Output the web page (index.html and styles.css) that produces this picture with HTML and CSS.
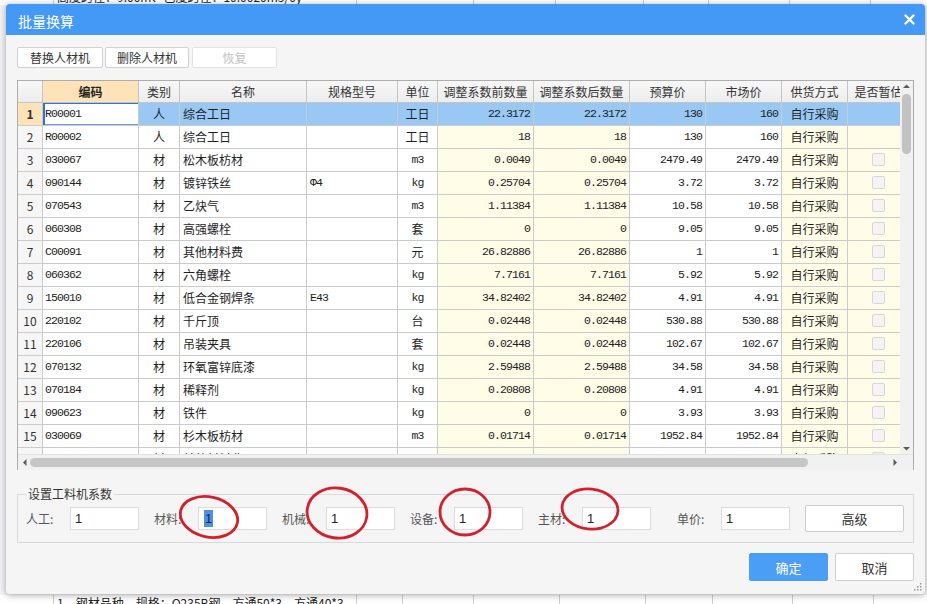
FILE: index.html
```html
<!DOCTYPE html>
<html lang="zh-CN">
<head>
<meta charset="utf-8">
<title>批量换算</title>
<link rel="stylesheet" href="styles.css">
</head>
<body>
<div class="backdrop">
  <div class="bg-row bg-top">
    <div class="bc w53"></div>
    <div class="bc w303 txt">高度跨径：9.00m、已度跨径：10.0020m3/0y</div>
    <div class="bc w117"></div>
    <div class="bc w82"></div>
    <div class="bc w88"></div>
    <div class="bc w65"></div>
    <div class="bc w81"></div>
    <div class="bc w81"></div>
    <div class="bc"></div>
  </div>
  <div class="bg-row bg-bottom">
    <div class="bc w53"></div>
    <div class="bc w303 txt">1、钢材品种、规格：Q235B钢、方通50*3、方通40*3</div>
    <div class="bc w46"></div>
    <div class="bc w71"></div>
    <div class="bc w86"></div>
    <div class="bc w86"></div>
    <div class="bc w67"></div>
    <div class="bc w80"></div>
    <div class="bc w81"></div>
    <div class="bc"></div>
  </div>
</div>

<div class="dialog">
  <div class="dlg-head">
    <span class="dlg-title">批量换算</span>
    <svg class="dlg-close" width="11" height="11" viewBox="0 0 11 11"><path d="M1.5 1.5 L9.5 9.5 M9.5 1.5 L1.5 9.5" stroke="#fff" stroke-width="2.4" stroke-linecap="round"/></svg>
  </div>
  <div class="dlg-body">
    <div class="toolbar">
      <button class="btn b1">替换人材机</button>
      <button class="btn b2">删除人材机</button>
      <button class="btn b3" disabled>恢复</button>
    </div>

    <div class="grid">
      <div class="grid-main">
        <div class="view">
          <div class="row head">
            <div class="c rn"></div>
            <div class="c hsel">编码</div>
            <div class="c">类别</div>
            <div class="c">名称</div>
            <div class="c">规格型号</div>
            <div class="c">单位</div>
            <div class="c">调整系数前数量</div>
            <div class="c">调整系数后数量</div>
            <div class="c">预算价</div>
            <div class="c">市场价</div>
            <div class="c">供货方式</div>
            <div class="c">是否暂估</div>
          </div>

          <div class="row sel">
            <div class="c rn rsel">1</div>
            <div class="c code act">R00001</div>
            <div class="c ctr">人</div>
            <div class="c name">综合工日</div>
            <div class="c spec"></div>
            <div class="c ctr">工日</div>
            <div class="c n">22.3172</div>
            <div class="c n">22.3172</div>
            <div class="c n">130</div>
            <div class="c n">160</div>
            <div class="c ctr">自行采购</div>
            <div class="c ctr"></div>
          </div>

          <div class="row">
            <div class="c rn">2</div>
            <div class="c code">R00002</div>
            <div class="c ctr">人</div>
            <div class="c name">综合工日</div>
            <div class="c spec"></div>
            <div class="c ctr">工日</div>
            <div class="c n y">18</div>
            <div class="c n y">18</div>
            <div class="c n">130</div>
            <div class="c n">160</div>
            <div class="c ctr y">自行采购</div>
            <div class="c ctr y"></div>
          </div>

          <div class="row">
            <div class="c rn">3</div>
            <div class="c code">030067</div>
            <div class="c ctr">材</div>
            <div class="c name">松木板枋材</div>
            <div class="c spec"></div>
            <div class="c ctr um">m3</div>
            <div class="c n y">0.0049</div>
            <div class="c n y">0.0049</div>
            <div class="c n">2479.49</div>
            <div class="c n">2479.49</div>
            <div class="c ctr y">自行采购</div>
            <div class="c ctr y"><span class="cb"></span></div>
          </div>

          <div class="row">
            <div class="c rn">4</div>
            <div class="c code">090144</div>
            <div class="c ctr">材</div>
            <div class="c name">镀锌铁丝</div>
            <div class="c spec">Φ4</div>
            <div class="c ctr um">kg</div>
            <div class="c n y">0.25704</div>
            <div class="c n y">0.25704</div>
            <div class="c n">3.72</div>
            <div class="c n">3.72</div>
            <div class="c ctr y">自行采购</div>
            <div class="c ctr y"><span class="cb"></span></div>
          </div>

          <div class="row">
            <div class="c rn">5</div>
            <div class="c code">070543</div>
            <div class="c ctr">材</div>
            <div class="c name">乙炔气</div>
            <div class="c spec"></div>
            <div class="c ctr um">m3</div>
            <div class="c n y">1.11384</div>
            <div class="c n y">1.11384</div>
            <div class="c n">10.58</div>
            <div class="c n">10.58</div>
            <div class="c ctr y">自行采购</div>
            <div class="c ctr y"><span class="cb"></span></div>
          </div>

          <div class="row">
            <div class="c rn">6</div>
            <div class="c code">060308</div>
            <div class="c ctr">材</div>
            <div class="c name">高强螺栓</div>
            <div class="c spec"></div>
            <div class="c ctr">套</div>
            <div class="c n y">0</div>
            <div class="c n y">0</div>
            <div class="c n">9.05</div>
            <div class="c n">9.05</div>
            <div class="c ctr y">自行采购</div>
            <div class="c ctr y"><span class="cb"></span></div>
          </div>

          <div class="row">
            <div class="c rn">7</div>
            <div class="c code">C00091</div>
            <div class="c ctr">材</div>
            <div class="c name">其他材料费</div>
            <div class="c spec"></div>
            <div class="c ctr">元</div>
            <div class="c n y">26.82886</div>
            <div class="c n y">26.82886</div>
            <div class="c n">1</div>
            <div class="c n">1</div>
            <div class="c ctr y">自行采购</div>
            <div class="c ctr y"><span class="cb"></span></div>
          </div>

          <div class="row">
            <div class="c rn">8</div>
            <div class="c code">060362</div>
            <div class="c ctr">材</div>
            <div class="c name">六角螺栓</div>
            <div class="c spec"></div>
            <div class="c ctr um">kg</div>
            <div class="c n y">7.7161</div>
            <div class="c n y">7.7161</div>
            <div class="c n">5.92</div>
            <div class="c n">5.92</div>
            <div class="c ctr y">自行采购</div>
            <div class="c ctr y"><span class="cb"></span></div>
          </div>

          <div class="row">
            <div class="c rn">9</div>
            <div class="c code">150010</div>
            <div class="c ctr">材</div>
            <div class="c name">低合金钢焊条</div>
            <div class="c spec">E43</div>
            <div class="c ctr um">kg</div>
            <div class="c n y">34.82402</div>
            <div class="c n y">34.82402</div>
            <div class="c n">4.91</div>
            <div class="c n">4.91</div>
            <div class="c ctr y">自行采购</div>
            <div class="c ctr y"><span class="cb"></span></div>
          </div>

          <div class="row">
            <div class="c rn">10</div>
            <div class="c code">220102</div>
            <div class="c ctr">材</div>
            <div class="c name">千斤顶</div>
            <div class="c spec"></div>
            <div class="c ctr">台</div>
            <div class="c n y">0.02448</div>
            <div class="c n y">0.02448</div>
            <div class="c n">530.88</div>
            <div class="c n">530.88</div>
            <div class="c ctr y">自行采购</div>
            <div class="c ctr y"><span class="cb"></span></div>
          </div>

          <div class="row">
            <div class="c rn">11</div>
            <div class="c code">220106</div>
            <div class="c ctr">材</div>
            <div class="c name">吊装夹具</div>
            <div class="c spec"></div>
            <div class="c ctr">套</div>
            <div class="c n y">0.02448</div>
            <div class="c n y">0.02448</div>
            <div class="c n">102.67</div>
            <div class="c n">102.67</div>
            <div class="c ctr y">自行采购</div>
            <div class="c ctr y"><span class="cb"></span></div>
          </div>

          <div class="row">
            <div class="c rn">12</div>
            <div class="c code">070132</div>
            <div class="c ctr">材</div>
            <div class="c name">环氧富锌底漆</div>
            <div class="c spec"></div>
            <div class="c ctr um">kg</div>
            <div class="c n y">2.59488</div>
            <div class="c n y">2.59488</div>
            <div class="c n">34.58</div>
            <div class="c n">34.58</div>
            <div class="c ctr y">自行采购</div>
            <div class="c ctr y"><span class="cb"></span></div>
          </div>

          <div class="row">
            <div class="c rn">13</div>
            <div class="c code">070184</div>
            <div class="c ctr">材</div>
            <div class="c name">稀释剂</div>
            <div class="c spec"></div>
            <div class="c ctr um">kg</div>
            <div class="c n y">0.20808</div>
            <div class="c n y">0.20808</div>
            <div class="c n">4.91</div>
            <div class="c n">4.91</div>
            <div class="c ctr y">自行采购</div>
            <div class="c ctr y"><span class="cb"></span></div>
          </div>

          <div class="row">
            <div class="c rn">14</div>
            <div class="c code">090623</div>
            <div class="c ctr">材</div>
            <div class="c name">铁件</div>
            <div class="c spec"></div>
            <div class="c ctr um">kg</div>
            <div class="c n y">0</div>
            <div class="c n y">0</div>
            <div class="c n">3.93</div>
            <div class="c n">3.93</div>
            <div class="c ctr y">自行采购</div>
            <div class="c ctr y"><span class="cb"></span></div>
          </div>

          <div class="row">
            <div class="c rn">15</div>
            <div class="c code">030069</div>
            <div class="c ctr">材</div>
            <div class="c name">杉木板枋材</div>
            <div class="c spec"></div>
            <div class="c ctr um">m3</div>
            <div class="c n y">0.01714</div>
            <div class="c n y">0.01714</div>
            <div class="c n">1952.84</div>
            <div class="c n">1952.84</div>
            <div class="c ctr y">自行采购</div>
            <div class="c ctr y"><span class="cb"></span></div>
          </div>

          <div class="row">
            <div class="c rn">16</div>
            <div class="c code">C00092</div>
            <div class="c ctr">材</div>
            <div class="c name">其他材料费</div>
            <div class="c spec"></div>
            <div class="c ctr">元</div>
            <div class="c n y">0.0235</div>
            <div class="c n y">0.0235</div>
            <div class="c n">1</div>
            <div class="c n">1</div>
            <div class="c ctr y">自行采购</div>
            <div class="c ctr y"><span class="cb"></span></div>
          </div>
        </div>
        <div class="vscroll">
          <svg class="arr" width="13" height="10" viewBox="0 0 13 10"><path d="M3 7 L6.5 3.5 L10 7 Z" fill="#5a5a5a"/></svg>
          <div class="vtrack"><div class="vthumb"></div></div>
          <svg class="arr" width="13" height="10" viewBox="0 0 13 10"><path d="M3 3 L6.5 6.5 L10 3 Z" fill="#5a5a5a"/></svg>
        </div>
      </div>
      <div class="grid-hbar">
        <div class="hscroll">
          <svg class="harr" width="10" height="15" viewBox="0 0 10 15"><path d="M6.5 4 L3 7.5 L6.5 11 Z" fill="#5a5a5a"/></svg>
          <div class="htrack"><div class="hthumb"></div></div>
          <svg class="harr" width="10" height="15" viewBox="0 0 10 15"><path d="M3.5 4 L7 7.5 L3.5 11 Z" fill="#5a5a5a"/></svg>
        </div>
        <div class="corner"></div>
      </div>
    </div>

    <fieldset class="coef">
      <legend>设置工料机系数</legend>
      <div class="fgroup"><span class="flabel">人工:</span><div class="field">1</div></div>
      <div class="fgroup"><span class="flabel">材料:</span><div class="field"><span class="seltext">1</span></div></div>
      <div class="fgroup"><span class="flabel">机械:</span><div class="field">1</div></div>
      <div class="fgroup"><span class="flabel">设备:</span><div class="field">1</div></div>
      <div class="fgroup"><span class="flabel">主材:</span><div class="field">1</div></div>
      <div class="fgroup price"><span class="flabel">单价:</span><div class="field">1</div></div>
      <button class="btn adv">高级</button>
    </fieldset>

    <div class="footer">
      <button class="btn ok">确定</button>
      <button class="btn cancel">取消</button>
    </div>
  </div>
  <svg class="grip" width="8" height="8" viewBox="0 0 8 8"><g fill="#9a9a9a"><rect x="6" y="0" width="1.5" height="1.5"/><rect x="3" y="3" width="1.5" height="1.5"/><rect x="6" y="3" width="1.5" height="1.5"/><rect x="0" y="6" width="1.5" height="1.5"/><rect x="3" y="6" width="1.5" height="1.5"/><rect x="6" y="6" width="1.5" height="1.5"/></g></svg>
</div>

<svg class="marks" width="927" height="604" viewBox="0 0 927 604">
  <g fill="none" stroke="#d3202d" stroke-width="2.8">
    <ellipse cx="209" cy="517" rx="29" ry="20" transform="rotate(12 209 517)"/>
    <ellipse cx="337" cy="513" rx="30" ry="25" transform="rotate(8 337 513)"/>
    <ellipse cx="465" cy="512" rx="25" ry="23"/>
    <ellipse cx="590" cy="509" rx="28" ry="20" transform="rotate(6 590 509)"/>
  </g>
</svg>
</body>
</html>
```

FILE: styles.css
```css
* { box-sizing: border-box; }

html, body {
  margin: 0;
  padding: 0;
}

body {
  width: 927px;
  height: 604px;
  overflow: hidden;
  position: relative;
  background: #ffffff;
  font-family: "Noto Sans CJK SC", "Noto Sans", sans-serif;
  font-size: 12px;
  color: #222;
}

/* ---------- backdrop page ---------- */
.backdrop {
  height: 604px;
  display: flex;
  flex-direction: column;
  justify-content: space-between;
  background: #f3f4f6;
}

.bg-row {
  display: flex;
  height: 16px;
  background: #ffffff;
  font-size: 12px;
  line-height: 16px;
  color: #222;
}

.bg-top { margin-top: -11px; }
.bg-bottom { margin-bottom: -7px; }

.bc {
  flex: none;
  border-left: 1px solid #cfcfcf;
  white-space: nowrap;
  overflow: hidden;
}
.bc:first-child { border-left: none; }
.bc:last-child { flex: 1; }
.bc.txt { padding-left: 3px; }

.w53 { width: 53px; }
.w303 { width: 303px; }
.w117 { width: 117px; }
.w82 { width: 82px; }
.w88 { width: 88px; }
.w65 { width: 65px; }
.w81 { width: 81px; }
.w46 { width: 46px; }
.w71 { width: 71px; }
.w86 { width: 86px; }
.w67 { width: 67px; }
.w80 { width: 80px; }

/* ---------- dialog ---------- */
.dialog {
  position: absolute;
  left: 6px;
  top: 4px;
  width: 919px;
  height: 590px;
  background: #f5f5f5;
  border-radius: 4px;
  box-shadow: 0 1px 7px rgba(0, 0, 0, 0.35);
  overflow: hidden;
}

.dlg-head {
  height: 31px;
  background: #4399f5;
  display: flex;
  align-items: center;
  justify-content: space-between;
  padding: 0 10px 0 12px;
}

.dlg-title {
  color: #ffffff;
  font-size: 14px;
  line-height: 18px;
  margin-top: 2px;
}

.dlg-close { display: block; }

.dlg-body {
  padding: 12px 11px 0 11px;
}

/* toolbar */
.toolbar {
  display: flex;
  gap: 2px;
  height: 21px;
}

.btn {
  font-family: "Noto Sans CJK SC", "Noto Sans", sans-serif;
  font-size: 12px;
  color: #333;
  background: #ffffff;
  border: 1px solid #d2d2d2;
  border-radius: 2px;
  padding: 0;
  margin: 0;
}

.b1 { width: 86px; }
.b2 { width: 84px; }
.b3 { width: 85px; margin-left: 1px; color: #c2c2c2; border-color: #e3e3e3; }

/* grid */
.grid {
  margin-top: 12px;
  width: 897px;
  height: 390px;
  border: 1px solid #adadad;
  background: #ffffff;
  display: flex;
  flex-direction: column;
}

.grid-main {
  display: flex;
  height: 373px;
}

.view {
  width: 882px;
  height: 373px;
  overflow: hidden;
}

.row {
  display: grid;
  grid-template-columns: 25px 96px 41px 127px 91px 40px 96px 96px 76px 76px 66px 62px;
  width: 892px;
  height: 23px;
}

.c {
  height: 23px;
  border-right: 1px solid #cbcbcb;
  border-bottom: 1px solid #cbcbcb;
  line-height: 22px;
  white-space: nowrap;
  overflow: hidden;
  font-size: 12px;
  color: #1e1e1e;
}

.head {
  height: 22px;
  background: linear-gradient(#f7f7f7, #ececec);
}
.head .c {
  height: 22px;
  line-height: 21px;
  text-align: center;
  color: #333;
  border-color: #c4c4c4;
}
.head .hsel {
  background: #fde3b7;
  font-weight: bold;
  color: #222;
}

.rn {
  text-align: center;
  background: #f6f6f6;
  color: #333;
}
.head .rn { background: transparent; }
.rsel {
  background: #fde3b7;
  font-weight: bold;
}

.code {
  padding-left: 2px;
  font-family: "Liberation Mono", monospace;
  font-size: 11.5px;
  letter-spacing: -0.9px;
  color: #222;
}

.ctr { text-align: center; }
.name { padding-left: 3px; }

.spec {
  padding-left: 3px;
  font-family: "Liberation Mono", monospace;
  font-size: 11.5px;
  letter-spacing: -0.9px;
}

.um {
  font-family: "Liberation Mono", monospace;
  font-size: 11.5px;
  letter-spacing: -0.9px;
}

.n {
  text-align: right;
  padding-right: 3px;
  font-family: "Liberation Mono", monospace;
  font-size: 11.5px;
  letter-spacing: -0.9px;
  color: #222;
}

.y { background: #fffde8; }

.sel .c { background: #99c8f4; }
.sel .rn.rsel { background: #fde3b7; }
.sel .act {
  background: #ffffff;
  box-shadow: inset 2px 0 0 #2f72d6, inset 0 1px 0 #2f72d6, inset 0 -1px 0 #6d9be0;
}

.cb {
  display: inline-block;
  width: 13px;
  height: 13px;
  margin-top: 4px;
  vertical-align: top;
  border: 1px solid #d7d7d7;
  border-radius: 2px;
  background: #f4f4f4;
}

/* scrollbars */
.vscroll {
  width: 13px;
  height: 373px;
  background: #f1f1f1;
  display: flex;
  flex-direction: column;
  align-items: center;
}
.arr { display: block; flex: none; }
.vtrack {
  flex: 1;
  width: 13px;
  display: flex;
  justify-content: center;
}
.vthumb {
  width: 9px;
  height: 60px;
  margin-top: 3px;
  background: #c2c2c2;
  border-radius: 5px;
}

.grid-hbar {
  display: flex;
  height: 15px;
  border-top: 1px solid #e2e2e2;
}
.hscroll {
  width: 882px;
  height: 15px;
  background: #f1f1f1;
  display: flex;
  align-items: center;
  padding-left: 2px;
}
.harr { display: block; flex: none; }
.htrack {
  flex: 1;
  height: 15px;
  display: flex;
  align-items: center;
}
.hthumb {
  width: 778px;
  height: 9px;
  background: #c6c6c6;
  border-radius: 5px;
}
.corner {
  width: 13px;
  height: 15px;
  background: #f1f1f1;
}

/* coefficients */
.coef {
  margin: 17px 0 0 0;
  width: 897px;
  border: 1px solid #dadada;
  padding: 4px 8px 10px 8px;
  display: flex;
  align-items: center;
}
.coef legend {
  padding: 0 2px;
  font-size: 12px;
  line-height: 14px;
  color: #333;
}

.fgroup {
  display: flex;
  align-items: center;
  margin-right: 15px;
}
.fgroup.price { margin-left: 11px; }

.flabel {
  width: 44px;
  font-size: 12px;
  color: #555;
}

.field {
  width: 69px;
  height: 23px;
  background: #ffffff;
  border: 1px solid #dcdcdc;
  padding-left: 4px;
  font-family: "Liberation Sans", sans-serif;
  font-size: 13px;
  line-height: 21px;
  color: #222;
}

.seltext {
  display: inline-block;
  height: 17px;
  line-height: 17px;
  padding: 0 1px;
  margin-left: 1px;
  background: #4d8fe3;
  color: #13235a;
  vertical-align: middle;
  margin-top: -2px;
}

.adv {
  width: 99px;
  height: 27px;
  font-size: 13px;
  border-color: #cdcdcd;
}

/* footer */
.footer {
  display: flex;
  justify-content: flex-end;
  gap: 7px;
  margin-top: 10px;
}
.ok, .cancel {
  width: 79px;
  height: 28px;
  font-size: 13px;
}
.ok {
  background: #4b9ef6;
  border-color: #4b9ef6;
  color: #ffffff;
}
.cancel {
  border-color: #cfcfcf;
  color: #333;
}

.grip {
  position: absolute;
  right: 3px;
  bottom: 3px;
}

.marks {
  position: absolute;
  left: 0;
  top: 0;
  pointer-events: none;
}
```
